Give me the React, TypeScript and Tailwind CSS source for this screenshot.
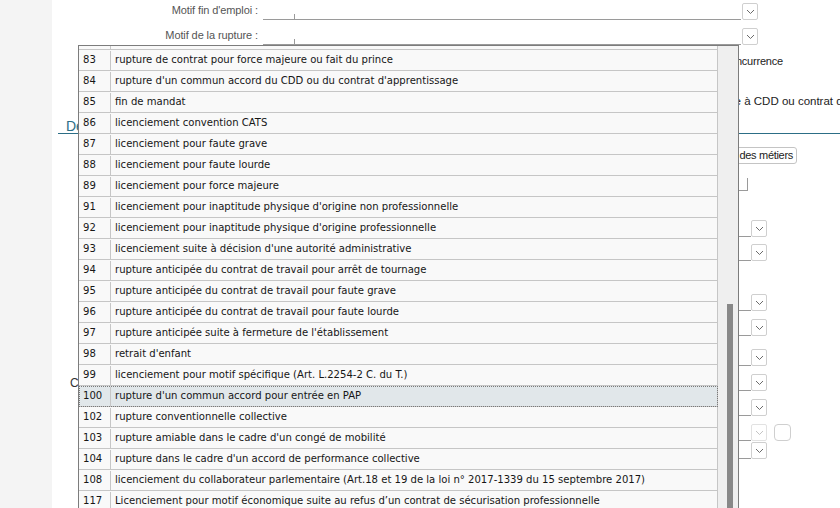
import React from "react";

type Reason = { code: string; label: string };

const REASONS: Reason[] = [
  { code: "82", label: "résiliation judiciaire du contrat de travail" },
  { code: "83", label: "rupture de contrat pour force majeure ou fait du prince" },
  { code: "84", label: "rupture d'un commun accord du CDD ou du contrat d'apprentissage" },
  { code: "85", label: "fin de mandat" },
  { code: "86", label: "licenciement convention CATS" },
  { code: "87", label: "licenciement pour faute grave" },
  { code: "88", label: "licenciement pour faute lourde" },
  { code: "89", label: "licenciement pour force majeure" },
  { code: "91", label: "licenciement pour inaptitude physique d'origine non professionnelle" },
  { code: "92", label: "licenciement pour inaptitude physique d'origine professionnelle" },
  { code: "93", label: "licenciement suite à décision d'une autorité administrative" },
  { code: "94", label: "rupture anticipée du contrat de travail pour arrêt de tournage" },
  { code: "95", label: "rupture anticipée du contrat de travail pour faute grave" },
  { code: "96", label: "rupture anticipée du contrat de travail pour faute lourde" },
  { code: "97", label: "rupture anticipée suite à fermeture de l'établissement" },
  { code: "98", label: "retrait d'enfant" },
  { code: "99", label: "licenciement pour motif spécifique (Art. L.2254-2 C. du T.)" },
  { code: "100", label: "rupture d'un commun accord pour entrée en PAP" },
  { code: "102", label: "rupture conventionnelle collective" },
  { code: "103", label: "rupture amiable dans le cadre d'un congé de mobilité" },
  { code: "104", label: "rupture dans le cadre d'un accord de performance collective" },
  { code: "108", label: "licenciement du collaborateur parlementaire (Art.18 et 19 de la loi n° 2017-1339 du 15 septembre 2017)" },
  { code: "117", label: "Licenciement pour motif économique suite au refus d’un contrat de sécurisation professionnelle" },
];

const Chevron = ({ faded = false }: { faded?: boolean }) => (
  <svg width="9" height="6" viewBox="0 0 9 6" fill="none">
    <path d="M1 1l3.5 3.5L8 1" stroke={faded ? "#c4c4c4" : "#6b6b6b"} strokeWidth="1" />
  </svg>
);

const ArrowBox = ({ faded = false }: { faded?: boolean }) => (
  <div
    className={`flex h-[17px] w-[16px] shrink-0 items-center justify-center rounded-[2px] border bg-white ${
      faded ? "border-[#e2e2e2]" : "border-[#cfcfcf]"
    }`}
  >
    <Chevron faded={faded} />
  </div>
);

const MotifRow = ({ label }: { label: string }) => (
  <div className="flex h-[25px] items-start pt-[2px]">
    <div className="flex h-[17px] w-[206px] items-center justify-end text-[11px] tracking-[-0.1px] text-[#555]">
      {label}
    </div>
    <div className="ml-[5px] flex h-[18px] w-[478px] items-end border-b border-[#9a9a9a] pl-[31px]">
      <span className="h-[5px] w-px bg-[#9a9a9a]" />
    </div>
    <div className="ml-[1px] mt-[1px]">
      <ArrowBox />
    </div>
  </div>
);

const SelectStub = ({ top, faded = false, label, check = false }: { top: string; faded?: boolean; label?: string; check?: boolean }) => (
  <div className={`flex h-[17px] items-end ${top}`}>
    {label ? <span className="ml-[18px] self-center text-[12px] text-[#333]">{label}</span> : null}
    <div className="ml-auto flex items-end">
      <div className="h-px w-[220px] bg-[#9a9a9a]" />
      <ArrowBox faded={faded} />
    </div>
    <div className="w-[73px] shrink-0 pl-[7px]">
      {check ? <div className="h-[17px] w-[17px] rounded-[4px] border border-[#cfcfcf] bg-white" /> : null}
    </div>
  </div>
);

export default function App() {
  return (
    <div className="relative flex h-[508px] w-[840px] overflow-hidden bg-white font-['Liberation_Sans',Arial,sans-serif] text-[#222]">
      <aside className="w-[52px] shrink-0 bg-[#f4f4f4]" />

      <main className="flex min-w-0 flex-1 flex-col">
        <MotifRow label="Motif fin d'emploi :" />
        <MotifRow label="Motif de la rupture :" />

        <div className="flex h-[22px] items-center justify-end pr-[57px] text-[11px] tracking-[-0.2px] text-[#222]">
          Clause de non-concurrence
        </div>
        <div className="h-[18px]" />
        <div className="flex h-[22px] items-center whitespace-nowrap pt-[1px] text-[11.5px] text-[#222]">
          <span className="w-[689px] shrink-0 text-right">Indemnité de fin de contrat liée</span>
          <span>&nbsp;à CDD ou contrat d'usage</span>
        </div>

        <div className="ml-[6px] flex h-[22px] items-end border-b border-[#2c6e86] pl-[8px] text-[14px] leading-[13px] text-[#2c6e86]">
          Dernier contrat
        </div>

        <div className="mt-[13px] flex justify-end pr-[43px]">
          <button className="h-[17px] rounded-[3px] border border-[#c4c4c4] bg-white px-[3px] text-[11px] leading-[15px] tracking-[-0.3px] text-[#222]">
            Référentiel des métiers
          </button>
        </div>

        <div className="mt-[14px] flex justify-end pr-[92px]">
          <div className="h-[13px] w-[80px] border-b border-r border-[#9a9a9a]" />
        </div>

        <SelectStub top="mt-[29px]" />
        <SelectStub top="mt-[7px]" />
        <SelectStub top="mt-[33px]" />
        <SelectStub top="mt-[8px]" />
        <SelectStub top="mt-[13px]" />
        <SelectStub top="mt-[8px]" label="Commentaire" />
        <SelectStub top="mt-[8px]" />
        <SelectStub top="mt-[8px]" faded check />
        <SelectStub top="mt-[1px]" />
      </main>

      {/* open dropdown of "Motif de la rupture" */}
      <div className="absolute left-[78px] top-[45px] flex h-[470px] w-[661px] overflow-hidden border-x border-t border-[#7c7c7c] bg-[#efefef]">
        <div className="w-[639px] shrink-0 overflow-hidden">
          <div className="-mt-[17px] font-['DejaVu_Sans_Condensed','DejaVu_Sans',sans-serif] text-[11.2px] text-[#161616]">
            {REASONS.map((r) => {
              const active = r.code === "100";
              return (
                <div
                  key={r.code}
                  className={`flex h-[21px] border-b border-r border-[#c6c6c6] pt-[1px] ${
                    active ? "bg-[#e1e7ea] outline-1 -outline-offset-1 outline-dotted outline-[#7a7a7a]" : "bg-[#f9f9f9]"
                  }`}
                >
                  <div className="flex w-[32px] shrink-0 items-center border-r border-[#c6c6c6] pl-[4px]">{r.code}</div>
                  <div className="flex min-w-0 items-center whitespace-nowrap pl-[4px]">{r.label}</div>
                </div>
              );
            })}
          </div>
        </div>
        <div className="flex w-[20px] shrink-0 flex-col pt-[258px]">
          <div className="ml-[9px] w-[6px] flex-1 bg-[#888]" />
        </div>
      </div>
    </div>
  );
}
